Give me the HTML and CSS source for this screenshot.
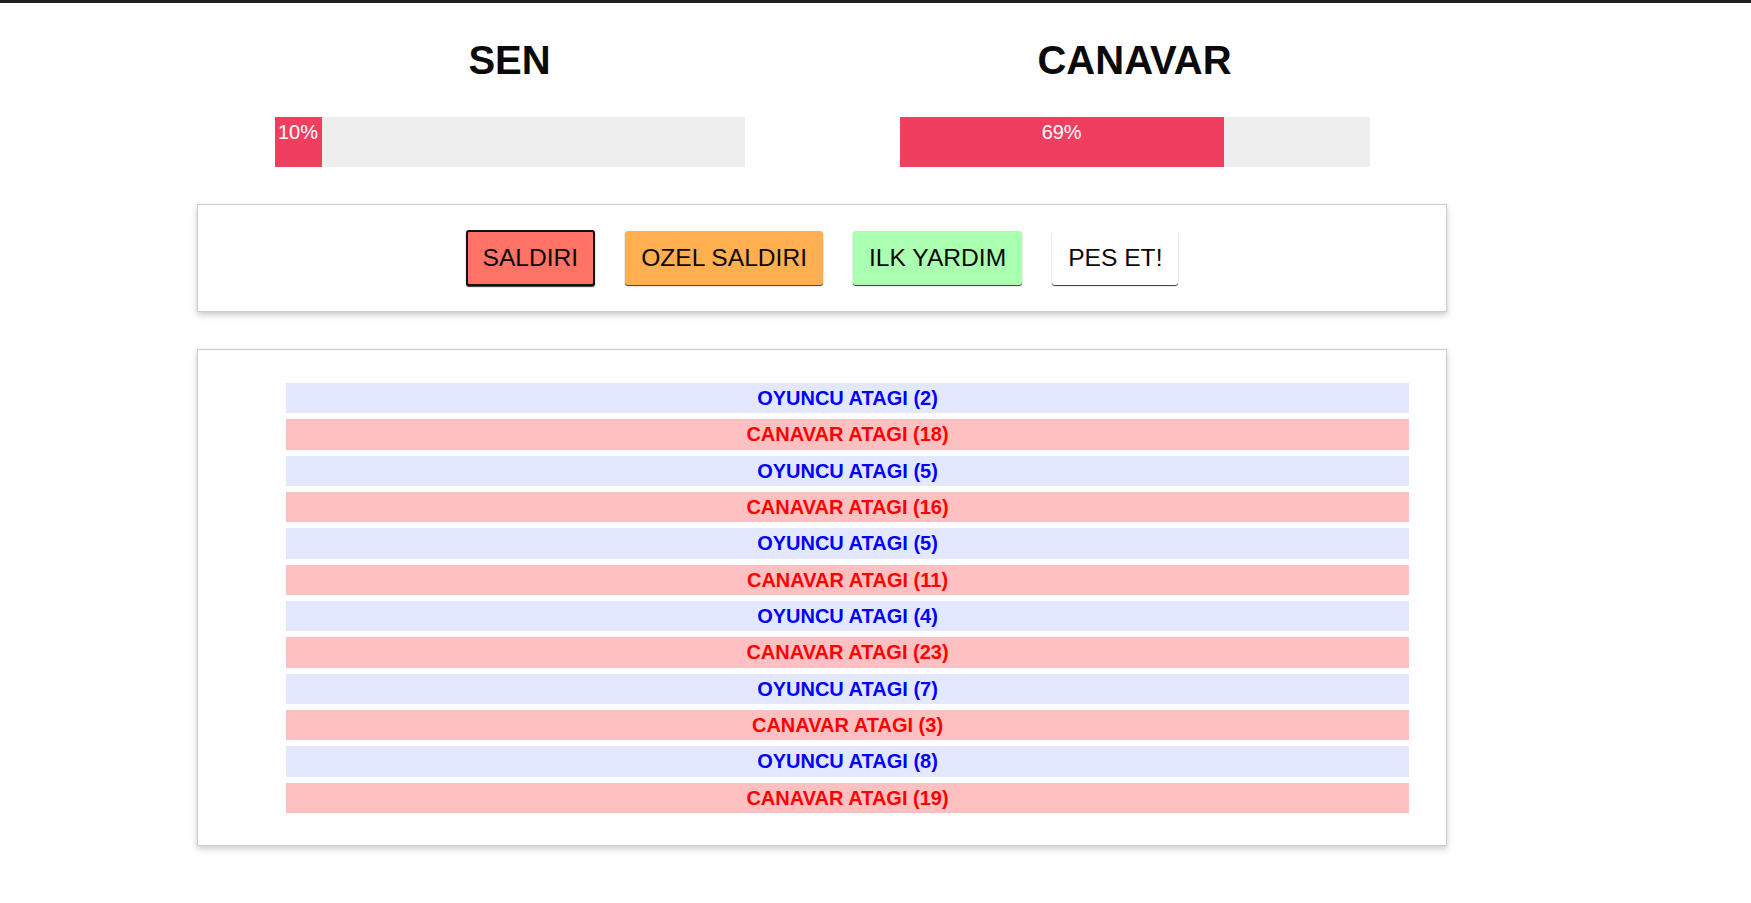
FILE: index.html
```html
<!DOCTYPE html>
<html lang="tr">
<head>
<meta charset="utf-8">
<title>Canavar Oyunu</title>
<link rel="stylesheet" href="styles.css">
</head>
<body>
<div class="app">
  <section class="players">
    <div class="player">
      <h1 class="name">SEN</h1>
      <div class="healthbar">
        <div class="health" style="width: 10%">10%</div>
      </div>
    </div>
    <div class="player">
      <h1 class="name">CANAVAR</h1>
      <div class="healthbar">
        <div class="health" style="width: 69%">69%</div>
      </div>
    </div>
  </section>

  <section class="controls">
    <button class="btn attack">SALDIRI</button>
    <button class="btn special">OZEL SALDIRI</button>
    <button class="btn heal">ILK YARDIM</button>
    <button class="btn giveup">PES ET!</button>
  </section>

  <section class="log">
    <ul class="turns">
      <li class="turn player-turn">Oyuncu atagı (2)</li>
      <li class="turn monster-turn">Canavar atagı (18)</li>
      <li class="turn player-turn">Oyuncu atagı (5)</li>
      <li class="turn monster-turn">Canavar atagı (16)</li>
      <li class="turn player-turn">Oyuncu atagı (5)</li>
      <li class="turn monster-turn">Canavar atagı (11)</li>
      <li class="turn player-turn">Oyuncu atagı (4)</li>
      <li class="turn monster-turn">Canavar atagı (23)</li>
      <li class="turn player-turn">Oyuncu atagı (7)</li>
      <li class="turn monster-turn">Canavar atagı (3)</li>
      <li class="turn player-turn">Oyuncu atagı (8)</li>
      <li class="turn monster-turn">Canavar atagı (19)</li>
    </ul>
  </section>
</div>
</body>
</html>
```

FILE: styles.css
```css
html, body {
  margin: 0;
  padding: 0;
}

body {
  background: #fefefe;
  border-top: 3px solid #202020;
  font-family: "Liberation Sans", Arial, sans-serif;
  color: #0a0a0a;
  min-height: 900px;
}

.app {
  width: 1250px;
  margin-left: 197px;
}

.players {
  display: grid;
  grid-template-columns: 1fr 1fr;
  padding-top: 34px;
}

.player {
  display: flex;
  flex-direction: column;
  align-items: center;
}

.name {
  margin: 0;
  font-size: 40px;
  line-height: 46px;
  font-weight: bold;
  text-align: center;
}

.healthbar {
  margin-top: 34px;
  width: 470px;
  height: 50px;
  background: #eeeeee;
}

.health {
  height: 100%;
  background: #f03e5f;
  color: #ffffff;
  font-size: 20px;
  line-height: 1.5;
  text-align: center;
}

.controls {
  margin-top: 37px;
  display: flex;
  justify-content: center;
  align-items: center;
  gap: 30px;
  padding: 25px 10px;
  border: 1px solid #cccccc;
  box-shadow: 0 3px 6px #cccccc;
  background: #fefefe;
}

.btn {
  font-family: "Liberation Sans", Arial, sans-serif;
  font-size: 24.6px;
  line-height: 28px;
  color: #0a0a0a;
  padding: 13px 16px;
  border: none;
  border-radius: 3px;
  box-shadow: 0 1px 1px rgba(0, 0, 0, 0.8);
  cursor: pointer;
}

.attack {
  background: #ff7367;
  border: 2px solid #111111;
  padding: 12px 15px;
}

.special {
  background: #ffaf4f;
}

.heal {
  background: #aaffb0;
}

.giveup {
  background: #ffffff;
}

.log {
  margin-top: 37px;
  padding: 10px;
  border: 1px solid #cccccc;
  box-shadow: 0 3px 6px #cccccc;
  background: #fefefe;
}

.turns {
  list-style: none;
  margin: 0;
  padding: 17px 22px 16px 73px;
}

.turn {
  margin: 6px 5px;
  line-height: 30.35px;
  font-size: 20px;
  font-weight: bold;
  text-transform: uppercase;
  text-align: center;
}

.player-turn {
  color: #0000ff;
  background: #e4e8ff;
}

.monster-turn {
  color: #ff0000;
  background: #ffc0c1;
}
```
